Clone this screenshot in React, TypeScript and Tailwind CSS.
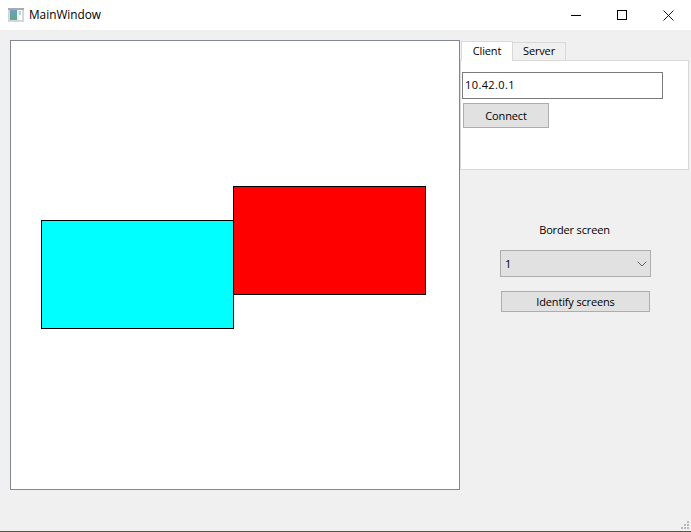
import { ChevronDown } from "lucide-react";

const SCREENS = [
  { id: 1, className: "left-[30px] top-[179px] bg-[#00ffff]" },
  { id: 2, className: "left-[222px] top-[145px] bg-[#ff0000]" },
];

function AppIcon() {
  return (
    <svg width="16" height="16" viewBox="0 0 16 16" className="ml-[8px] mr-[5px] shrink-0">
      <defs>
        <linearGradient id="pane" x1="0" y1="0" x2="0" y2="1">
          <stop offset="0" stopColor="#6f9fc0" />
          <stop offset="1" stopColor="#5fa888" />
        </linearGradient>
      </defs>
      <rect x="0" y="1" width="16" height="14" fill="#d4d6d8" />
      <rect x="0" y="1" width="16" height="2" fill="#a8abae" />
      <rect x="2" y="3" width="7" height="10" fill="url(#pane)" />
      <rect x="9" y="3" width="2" height="10" fill="#e8f0ec" />
      <rect x="11" y="3" width="3" height="10" fill="#ffffff" />
      <rect x="11" y="4" width="2" height="4" fill="#b9d3dc" />
    </svg>
  );
}

function TitleBar() {
  return (
    <div className="h-[30px] bg-white flex items-center text-black">
      <AppIcon />
      <span className="text-[11.8px] tracking-normal leading-none">MainWindow</span>
      <div className="ml-auto flex h-full items-center">
        <div className="w-[46px] h-full flex items-center justify-center">
          <svg width="10" height="10" viewBox="0 0 10 10"><path d="M0 5.5H10" stroke="#000" /></svg>
        </div>
        <div className="w-[46px] h-full flex items-center justify-center">
          <svg width="10" height="10" viewBox="0 0 10 10"><rect x="0.5" y="0.5" width="9" height="9" fill="none" stroke="#000" /></svg>
        </div>
        <div className="w-[46px] h-full flex items-center justify-center">
          <svg width="11" height="11" viewBox="0 0 11 11"><path d="M0.5 0.5L10.5 10.5M10.5 0.5L0.5 10.5" stroke="#000" strokeWidth="0.9" /></svg>
        </div>
      </div>
    </div>
  );
}

function Tabs() {
  return (
    <div className="w-[229px]">
      <div className="flex items-end h-[20px] pl-[1px]">
        <div className="w-[52px] h-[20px] -mb-px z-10 relative bg-white border border-[#d9d9d9] border-b-0 flex items-start justify-center pt-[1px] leading-[15px]">
          Client
        </div>
        <div className="w-[53px] h-[18px] bg-[#f0f0f0] border border-[#d9d9d9] border-l-0 border-b-0 flex items-center justify-center">
          Server
        </div>
      </div>
      <div className="h-[110px] bg-white border border-[#d9d9d9] pl-[1px] pt-[11px]">
        <div className="w-[201px] h-[27px] border border-[#7a7a7a] bg-white flex items-center pl-[2px] tracking-[0.4px]">
          10.42.0.1
        </div>
        <button className="block w-[86px] h-[25px] mt-[4px] ml-[1px] pt-[1px] bg-[#e1e1e1] border border-[#adadad]">
          Connect
        </button>
      </div>
    </div>
  );
}

export default function App() {
  return (
    <div
      className="w-[691px] h-[532px] overflow-hidden bg-[#f0f0f0] flex flex-col text-[11px] tracking-[-0.15px] text-black"
      style={{ fontFamily: '"Open Sans", "Noto Sans", sans-serif' }}
    >
      <TitleBar />
      <div className="flex-1 relative flex items-start pt-[10px] pl-[10px]">
        <div className="relative w-[450px] h-[450px] bg-white border border-[#828790] shrink-0">
          {SCREENS.map((s) => (
            <div key={s.id} className={`absolute w-[193px] h-[109px] border border-black ${s.className}`} />
          ))}
        </div>
        <div className="flex flex-col">
          <Tabs />
          <div className="text-center leading-[16px] mt-[52px] w-[229px]">Border screen</div>
          <div className="ml-[40px] mt-[12px] w-[151px] h-[27px] bg-[#e1e1e1] border border-[#adadad] flex items-center justify-between pl-[4px]">
            <span className="pt-[1px]">1</span>
            <ChevronDown size={16} strokeWidth={1} color="#222" />
          </div>
          <button className="ml-[41px] mt-[14px] w-[149px] h-[21px] pt-[1px] bg-[#e1e1e1] border border-[#adadad] flex items-center justify-center">
            Identify screens
          </button>
        </div>
        <div className="absolute right-[2px] bottom-[2px] grid grid-cols-3 gap-[1px] w-[8px]">
          {[0, 0, 1, 0, 1, 1, 1, 1, 1].map((on, i) => (
            <div key={i} className={on ? "w-[2px] h-[2px] bg-[#b8b8b8]" : "w-[2px] h-[2px]"} />
          ))}
        </div>
      </div>
      <div className="h-px bg-[#5c5240]" />
    </div>
  );
}
